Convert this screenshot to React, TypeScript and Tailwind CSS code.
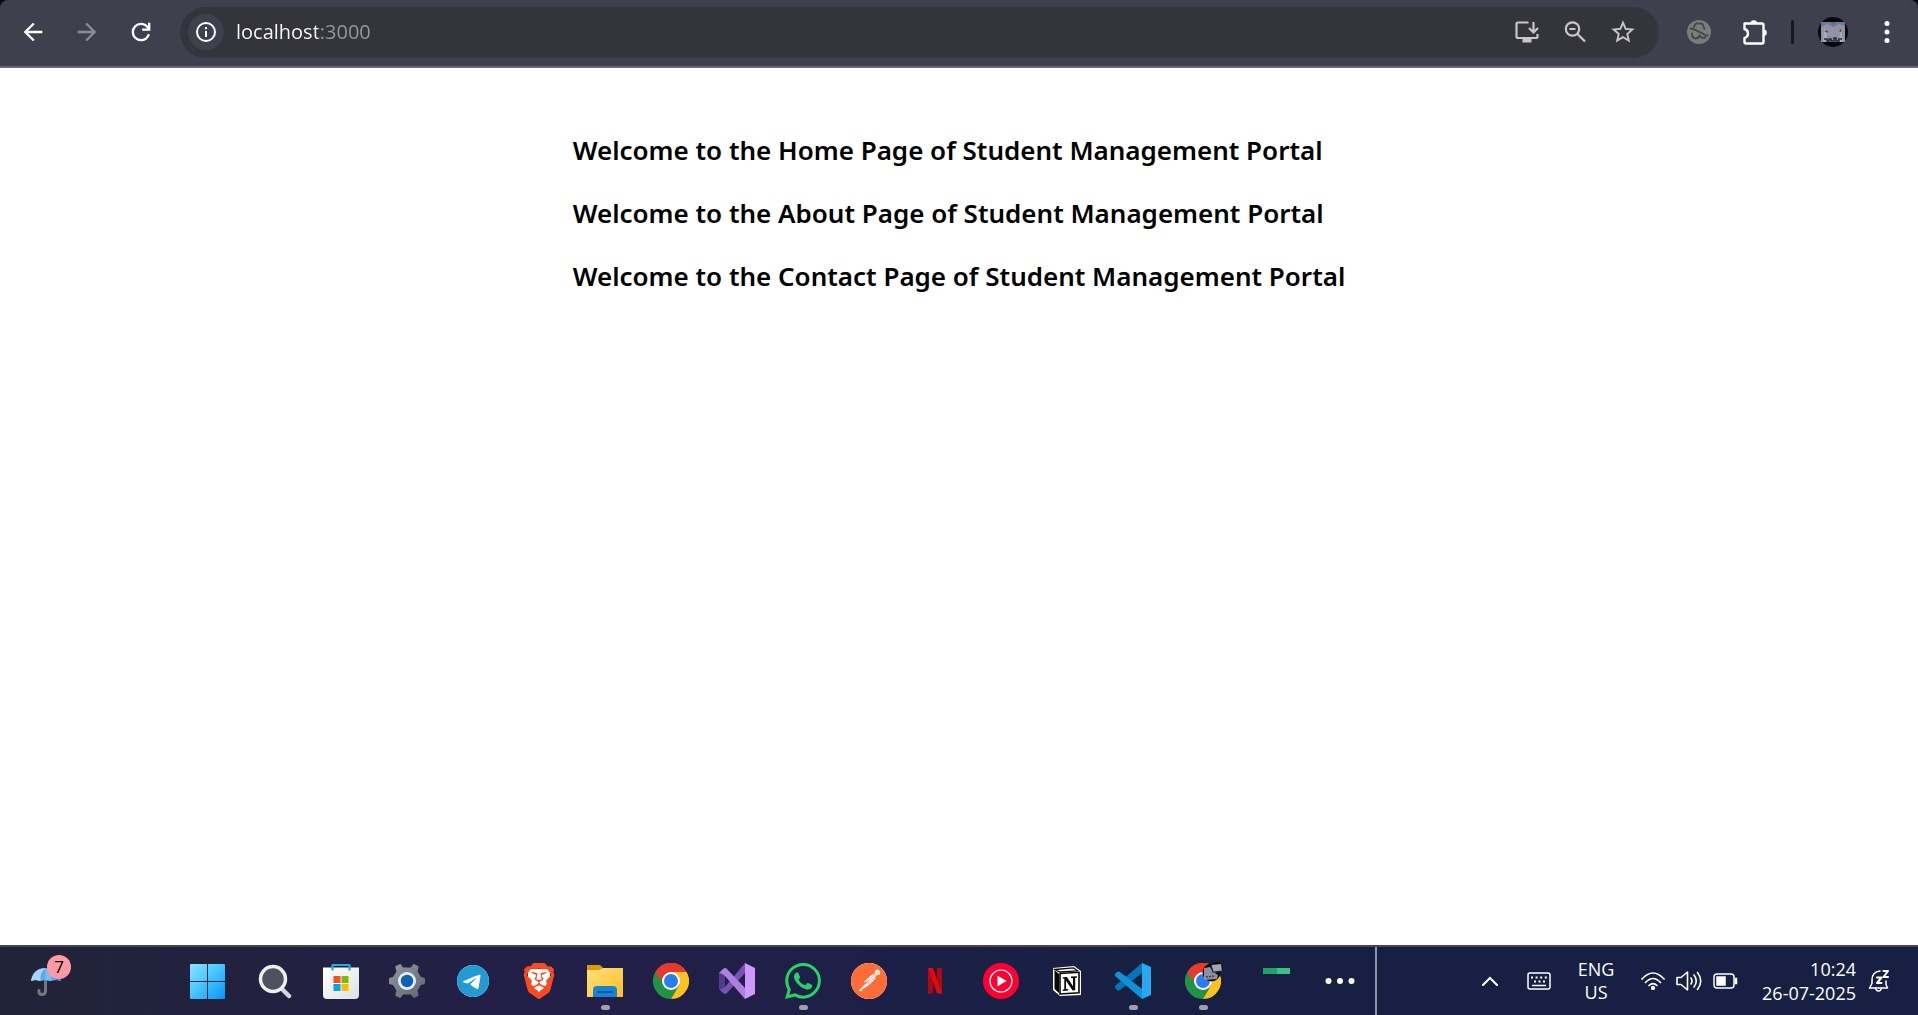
import type { ReactNode } from "react";
import { MdArrowBack, MdArrowForward, MdStarBorder } from "react-icons/md";
import { SiBrave, SiPostman, SiTelegram, SiWhatsapp } from "react-icons/si";

const headings = ["Home", "About", "Contact"];

function ToolButton({ label, children, className = "" }: { label: string; children: ReactNode; className?: string }) {
  return (
    <button type="button" aria-label={label} className={`flex size-9 shrink-0 items-center justify-center rounded-full ${className}`}>
      {children}
    </button>
  );
}

function ReloadIcon() {
  return (
    <svg viewBox="0 0 24 24" className="size-7" fill="currentColor">
      <path d="M12 20q-3.35 0-5.675-2.325T4 12t2.325-5.675T12 4q1.725 0 3.3.713T18 6.75V4h2v7h-7V9h4.2q-.8-1.4-2.187-2.2T12 6Q9.5 6 7.75 7.75T6 12t1.75 4.25T12 18q1.925 0 3.475-1.1T17.65 14h2.1q-.7 2.65-2.85 4.325T12 20" />
    </svg>
  );
}

function InfoIcon() {
  return (
    <svg viewBox="0 0 20 20" className="size-5" fill="none" stroke="currentColor" strokeWidth="2">
      <circle cx="10" cy="10" r="9" />
      <path d="M10 9v6M10 5v2.2" />
    </svg>
  );
}

function InstallIcon() {
  return (
    <svg viewBox="0 0 24 22" className="h-[22px] w-6" fill="none" stroke="currentColor" strokeWidth="2.2">
      <path d="M13.5 1.5H3q-1.500 0-1.500 1.500v12.500q0 1.500 1.500 1.500h18q1.500 0 1.500-1.500V13" />
      <path d="M18.500 1v9.500M14 7l4.500 4.500L23 7" />
      <path d="M7.500 19.500h9" strokeWidth="4" />
    </svg>
  );
}

function ZoomOutIcon() {
  return (
    <svg viewBox="0 0 22 22" className="size-[22px]" fill="none" stroke="currentColor" strokeWidth="2.200">
      <circle cx="8.500" cy="8" r="6.700" />
      <path d="M13.500 13l7.500 7.500M5.500 8h6" />
    </svg>
  );
}

function BlockedIcon() {
  return (
    <svg viewBox="0 0 24 24" className="size-6">
      <circle cx="12" cy="12" r="12" fill="#7c7c7c" />
      <g fill="none" stroke="#45464c" strokeWidth="1.800" strokeLinecap="round" strokeLinejoin="round">
        <path d="M6.500 7.500L8.500 4q1-1 3.500-.3 2.500-.7 3.500.3l2 5" />
        <path d="M3.500 8.500q4 .5 9 3.500t8 3.500" strokeWidth="2" />
        <path d="M5 13.500q0 5 3.500 5t4-3q3 4 6 1.500" />
      </g>
    </svg>
  );
}

function PuzzleIcon() {
  return (
    <svg viewBox="0 0 26 26" className="size-[26px]">
      <path
        d="M2.500 4.500H20q1.500 0 1.500 1.500v17q0 1.500-1.500 1.500H4q-1.500 0-1.500-1.500v-4q3.500-1 3.500-4.500t-3.500-4.500z"
        fill="none"
        stroke="white"
        strokeWidth="2.400"
        strokeLinejoin="round"
      />
      <path d="M8.500 4.500a3.300 3.300 0 0 1 6.600 0zM21.500 10.500a3.300 3.300 0 0 1 0 6.600z" fill="white" />
    </svg>
  );
}

function Jersey({ className }: { className: string }) {
  return (
    <svg viewBox="0 0 30 30" className={className}>
      <circle cx="15" cy="15" r="15" fill="#09090c" />
      <path d="M3 5h24v20H3z" fill="#9093a5" />
      <path d="M3 5h7l5 3 5-3h7v4l-6-2-6 3-6-3-6 3z" fill="#647ba4" />
      <path d="M11 5h8l-4 3z" fill="#8d5b50" />
      <path d="M6 11l3 4v10H5zM23 10l2 15h-4z" fill="#a8aaba" />
      <path d="M7 14l3 1M22.500 12v3" stroke="#714644" strokeWidth="1.500" />
      <path d="M6 22h3v2h2v-2h2v2h3v-3h2v3h3v-2h3" fill="none" stroke="#242a40" strokeWidth="1.500" />
    </svg>
  );
}

function BrowserBar() {
  return (
    <header className="bg-[#0b0a10]">
      <div className="flex h-[68px] items-center rounded-t-lg border-b-2 border-[#6a6673] bg-[#3f404e] pr-[13px] pb-0.5 pl-[15px] text-white">
        <nav aria-label="Browser navigation" className="flex gap-[18px]">
          <ToolButton label="Back"><MdArrowBack className="size-7" /></ToolButton>
          <ToolButton label="Forward" className="text-[#8b8c94]"><MdArrowForward className="size-7" /></ToolButton>
          <ToolButton label="Reload"><ReloadIcon /></ToolButton>
        </nav>
        <div className="ml-[21px] flex h-[51px] min-w-0 flex-1 items-center rounded-full bg-[#34343c] pr-[18px] pl-2">
          <ToolButton label="View site information" className="bg-[#3f404e]"><InfoIcon /></ToolButton>
          <input
            type="text"
            aria-label="Address"
            defaultValue="localhost:3000"
            className="ml-3 h-9 min-w-0 flex-1 bg-transparent bg-linear-to-r from-white from-[82px] to-[#97989e] to-[82px] bg-clip-text pb-0.5 font-['Open_Sans',sans-serif] text-[20px] text-transparent outline-none"
          />
          <div className="flex gap-3 text-[#c7c7c9]">
            <ToolButton label="Install app"><InstallIcon /></ToolButton>
            <ToolButton label="Zoom"><ZoomOutIcon /></ToolButton>
            <ToolButton label="Bookmark this tab"><MdStarBorder className="size-7" /></ToolButton>
          </div>
        </div>
        <div className="ml-[22px] flex items-center">
          <ToolButton label="Blocked extension"><BlockedIcon /></ToolButton>
          <ToolButton label="Extensions" className="ml-5"><PuzzleIcon /></ToolButton>
          <span className="ml-[18px] h-6 w-[3px] rounded-full bg-[#17171c]" />
          <ToolButton label="Profile" className="ml-[21px]"><Jersey className="size-[30px]" /></ToolButton>
          <ToolButton label="Browser menu" className="ml-[18px]">
            <svg viewBox="0 0 6 22" className="h-[22px] w-1.5" fill="white">
              <circle cx="3" cy="2.500" r="2.500" /><circle cx="3" cy="11" r="2.500" /><circle cx="3" cy="19.500" r="2.500" />
            </svg>
          </ToolButton>
        </div>
      </div>
    </header>
  );
}

function WeatherIcon() {
  return (
    <svg viewBox="0 0 34 30" className="h-[30px] w-[34px]">
      <path d="M15.500 10v14.500q0 4-3.500 4t-3-4" fill="none" stroke="#77777b" strokeWidth="3" strokeLinecap="round" />
      <path d="M1 15Q3 2 15.500 2T31 15l-5-1-5 1-5.500-1-5 1-5-1z" fill="#5fa9ee" />
      <path d="M1 15Q3 3 15.500 2q-6 5-5 13l-5-1z" fill="#a8d3f8" />
      <path d="M15.500 2q8 4 5.500 13l-5.500-1z" fill="#7dbbf3" />
      <path d="M15.500 2Q29 3 31 15l-5-1q-2-9-10.500-12" fill="#2d8ce0" />
    </svg>
  );
}

function WindowsIcon() {
  return (
    <svg viewBox="0 0 35 35" className="size-[35px]">
      <defs>
        <linearGradient id="win" gradientUnits="userSpaceOnUse" x1="0" y1="0" x2="35" y2="35">
          <stop stopColor="#8ce3ff" /><stop offset=".45" stopColor="#49c8fc" /><stop offset="1" stopColor="#0894fb" />
        </linearGradient>
      </defs>
      <path d="M1 0h16v17H0V1q0-1 1-1M18 0h16q1 0 1 1v16H18zM0 18h17v17H1q-1 0-1-1zM18 18h17v16q0 1-1 1H18z" fill="url(#win)" />
    </svg>
  );
}

function SearchIcon() {
  return (
    <svg viewBox="0 0 34 35" className="h-[35px] w-[34px]">
      <path d="M23 24l8 8" stroke="#d4d5da" strokeWidth="4.500" strokeLinecap="round" />
      <circle cx="15" cy="15" r="12.500" fill="#4f5060" stroke="#efeff1" strokeWidth="3.500" />
    </svg>
  );
}

function StoreIcon() {
  return (
    <svg viewBox="0 0 36 36" className="size-9">
      <defs>
        <linearGradient id="store" x2="1" y2="1"><stop stopColor="#fff" /><stop offset="1" stopColor="#dfe0e3" /></linearGradient>
      </defs>
      <path d="M0 4.500h36V32q0 4-4 4H4q-4 0-4-4z" fill="url(#store)" />
      <path d="M9.500 7.500V2h17v5.500" fill="none" stroke="#22aaf0" strokeWidth="2.200" strokeLinejoin="round" />
      <path d="M10.500 13h7v7h-7z" fill="#f25022" /><path d="M18.500 13h7v7h-7z" fill="#7fba00" />
      <path d="M10.500 21h7v7h-7z" fill="#00a4ef" /><path d="M18.500 21h7v7h-7z" fill="#ffb900" />
    </svg>
  );
}

function SettingsIcon() {
  return (
    <svg viewBox="0 0 36 36" className="size-9">
      <defs><linearGradient id="gear" x2="1" y2="1"><stop stopColor="#949ba1" /><stop offset="1" stopColor="#5b656d" /></linearGradient></defs>
      <path d="M7 3l3.500-1.800q1-.4 1.600.5L14 4.500h8l1.900-2.800q.6-.9 1.600-.5L29 3q1 .6.6 1.600L28.500 8.500l3.500 5.500 3 .7q1 .3 1 1.300v4q0 1-1 1.300l-3 .7-3.500 5.500 1.100 3.900q.4 1-.6 1.600l-3.500 1.800q-1 .4-1.600-.5L22 31.500h-8l-1.900 2.800q-.6.9-1.600.5L7 33q-1-.6-.6-1.600l1.100-3.900L4 22l-3-.7q-1-.3-1-1.300v-4q0-1 1-1.300L4 14l3.500-5.500-1.100-3.900Q6 3.600 7 3z" fill="url(#gear)" />
      <circle cx="18" cy="18" r="9" fill="#ececee" /><circle cx="18" cy="18" r="6.200" fill="#0b63b5" />
    </svg>
  );
}

function TelegramIcon() {
  return (
    <span className="flex size-8 items-center justify-center rounded-full bg-white">
      <SiTelegram className="size-8 text-[#229bd5]" />
    </span>
  );
}

function BraveIcon() {
  return (
    <span className="relative flex size-9 items-center justify-center">
      <span className="absolute h-6 w-[22px] rounded-b-xl bg-white" />
      <SiBrave className="relative size-9 text-[#fb4a20]" />
    </span>
  );
}

function FolderIcon() {
  return (
    <svg viewBox="0 0 36 34" className="h-[34px] w-9">
      <defs><linearGradient id="folder" x2="1" y2="1"><stop stopColor="#ffe07b" /><stop offset="1" stopColor="#ffbf25" /></linearGradient></defs>
      <path d="M0 1h12q2 0 4 3v4H0z" fill="#dd9a06" />
      <path d="M0 6h12l4-2h20v29H0z" fill="url(#folder)" />
      <path d="M6 33v-7q0-4 4-4h16q4 0 4 4v7z" fill="#1484d6" />
      <path d="M11 28h14" stroke="#0b539b" strokeWidth="2" strokeLinecap="round" />
    </svg>
  );
}

function ChromeIcon() {
  return (
    <svg viewBox="0 0 36 36" className="size-9">
      <path d="M18 18L2.410 9A18 18 0 0 1 33.590 9z" fill="#e33b2e" />
      <path d="M18 18L2.410 9A18 18 0 0 0 18 36l7.800-13.500z" fill="#219344" />
      <path d="M18 9h15.590A18 18 0 0 1 18 36l7.800-13.500z" fill="#fcc31e" />
      <path d="M2.410 9l7.800 13.500L18 18V9z" fill="#219344" />
      <path d="M2.410 9A18 18 0 0 1 33.590 9H18l-7.800 4.500-2.800 4.100z" fill="#e33b2e" />
      <circle cx="18" cy="18" r="9" fill="white" /><circle cx="18" cy="18" r="7" fill="#2c7cee" />
    </svg>
  );
}

function VisualStudioIcon() {
  return (
    <svg viewBox="0 0 36 36" className="size-9">
      <path d="M0 10l6-4v24l-6-4z" fill="#57398c" />
      <path d="M26 0v10L8 30q-2 2-4 0l-4-4q3 1 6-2z" fill="#7a52b5" />
      <path d="M0 10l4-4q2-2 4 0l18 19v11L6 13q-3-3-6-3" fill="#ae7fe2" />
      <path d="M26 0l10 5v26l-10 5z" fill="#cd98fc" />
    </svg>
  );
}

function YoutubeMusicIcon() {
  return (
    <svg viewBox="0 0 36 36" className="size-9">
      <circle cx="18" cy="18" r="18" fill="#ff0033" />
      <circle cx="18" cy="18" r="11" fill="none" stroke="white" strokeWidth="1.200" />
      <path d="M14.500 12.500l9 5.500-9 5.500z" fill="white" />
    </svg>
  );
}

function NetflixIcon() {
  return (
    <svg viewBox="0 0 14 26" className="h-[26px] w-3.5">
      <path d="M0 0h5v25l-5 1zM9 0h5v26l-5-1z" fill="#ad0a12" />
      <path d="M0 0h5l9 26-5-1z" fill="#e30914" />
    </svg>
  );
}

function NotionIcon() {
  return (
    <svg viewBox="0 0 30 30" className="size-[30px]">
      <path d="M1 2l21-2 7 5v24L8 30l-7-6z" fill="white" />
      <path d="M3 3.500l18.500-1.700 4 3L8 6z" fill="#fff" stroke="#080808" strokeWidth="1.300" />
      <path d="M2.500 4l4.500 4v19l-4.500-4z" fill="#080808" />
      <path d="M8 7.500l19-1.200v20.500L8 28z" fill="white" stroke="#080808" strokeWidth="1.600" />
      <path d="M11 11.300l4-.3 6 9.200v-8l-2-.3v-1.300l6-.4v1.300l-1.800.5v12.300l-2.600.2L14 14.700v8.200l2.300.4v1.200l-5.600.4v-1.200l1.600-.5v-10.400l-1.600-.3z" fill="#080808" />
    </svg>
  );
}

function CodeIcon() {
  return (
    <svg viewBox="0 0 36 36" className="size-9">
      <path d="M27 0v10L5 27q-2 1-3 0l-2-2q-1-1 0-2z" fill="#0674b9" />
      <path d="M0 13q-1-1 0-2l2-2q1-1 3 0l22 17v10z" fill="#1191d7" />
      <path d="M27 0l9 4v28l-9 4z" fill="#27a8f1" />
    </svg>
  );
}

function ProfileBadge() {
  return (
    <svg viewBox="0 0 21 20" className="absolute -top-px -right-0.5 h-5 w-[21px]">
      <circle cx="9.500" cy="10.500" r="9" fill="#09090c" />
      <circle cx="15" cy="6" r="6" fill="#09090c" />
      <path d="M2 6l6-1 3 5 5 3-1 4-13 1z" fill="#8c8fa0" />
      <path d="M9 3l10-1 1 7-9 2z" fill="#a3a5b3" />
      <path d="M9 3l2 7 9-1" fill="none" stroke="#26293a" strokeWidth="1.200" />
      <path d="M4 15l9-1" stroke="#3b4054" strokeWidth="1.500" strokeDasharray="2 1" />
    </svg>
  );
}

function ProfileChromeIcon() {
  return (
    <span className="relative">
      <ChromeIcon />
      <ProfileBadge />
    </span>
  );
}

function GreenBarsIcon() {
  return (
    <span className="mb-5 flex h-1.5 w-[27px] bg-[#35c583]"><span className="w-3.5 bg-[#239f67]" /></span>
  );
}

function MoreIcon() {
  return (
    <svg viewBox="0 0 30 6" className="h-1.5 w-[30px]" fill="white">
      <circle cx="3.500" cy="3" r="3" /><circle cx="15" cy="3" r="3" /><circle cx="26.500" cy="3" r="3" />
    </svg>
  );
}

const apps: { name: string; icon: ReactNode; open?: boolean }[] = [
  { name: "Search", icon: <SearchIcon /> },
  { name: "Microsoft Store", icon: <StoreIcon /> },
  { name: "Settings", icon: <SettingsIcon /> },
  { name: "Telegram", icon: <TelegramIcon /> },
  { name: "Brave", icon: <BraveIcon /> },
  { name: "File Explorer", icon: <FolderIcon />, open: true },
  { name: "Chrome", icon: <ChromeIcon /> },
  { name: "Visual Studio", icon: <VisualStudioIcon /> },
  { name: "WhatsApp", icon: <SiWhatsapp className="size-9 text-[#25d366]" />, open: true },
  { name: "Postman", icon: <span className="rounded-full bg-white"><SiPostman className="size-9 text-[#ff6c37]" /></span> },
  { name: "Netflix", icon: <NetflixIcon /> },
  { name: "YouTube Music", icon: <YoutubeMusicIcon /> },
  { name: "Notion", icon: <NotionIcon /> },
  { name: "Visual Studio Code", icon: <CodeIcon />, open: true },
];

function AppButton({ name, icon, open, className = "w-[66px]" }: { name: string; icon: ReactNode; open?: boolean; className?: string }) {
  return (
    <button type="button" aria-label={name} className={`relative flex h-full shrink-0 items-center justify-center ${className}`}>
      {icon}
      {open && <span className="absolute bottom-[5px] h-[5px] w-[9px] rounded-full bg-[#a09fae]" />}
    </button>
  );
}

function ChevronIcon() {
  return (
    <svg viewBox="0 0 18 10" className="h-2.5 w-[18px]" fill="none" stroke="white" strokeWidth="2" strokeLinecap="round">
      <path d="M2 9l7-7 7 7" />
    </svg>
  );
}

function KeyboardIcon() {
  return (
    <svg viewBox="0 0 24 18" className="h-[18px] w-6" fill="none" stroke="white" strokeWidth="1.500">
      <rect x="1" y="1" width="22" height="16" rx="2" />
      <path d="M4 5.500h16" strokeWidth="2" strokeDasharray="2 2.600" />
      <path d="M7 9.500h11" strokeWidth="2" strokeDasharray="2 2.500" />
      <path d="M5 13.500h14" />
    </svg>
  );
}

function StatusIcons() {
  return (
    <>
      <svg viewBox="0 0 24 18" className="h-[18px] w-6" fill="none" stroke="white" strokeWidth="1.700" strokeLinecap="round">
        <path d="M1 7Q12-5 23 7M4.500 10.500q7.500-8 15 0M8 13.500q4-4 8 0" />
        <circle cx="12" cy="16" r="1.300" fill="white" />
      </svg>
      <svg viewBox="0 0 26 22" className="h-[22px] w-[26px]" fill="none" stroke="white" strokeWidth="1.600" strokeLinecap="round" strokeLinejoin="round">
        <path d="M1 7.500h4L11.500 2v18L5 14.500H1z" />
        <path d="M15 8q2 3 0 6M18 5q4.500 6 0 12M21.500 2.500q6.500 8.500 0 17" />
      </svg>
      <svg viewBox="0 0 25 18" className="h-[18px] w-[25px]" fill="none" stroke="white" strokeWidth="1.500">
        <rect x="1" y="2" width="20" height="14" rx="3" />
        <path d="M4 5h8v8H4z" fill="white" />
        <path d="M22.500 6.500h1v5h-1z" fill="white" />
      </svg>
    </>
  );
}

function QuietBellIcon() {
  return (
    <svg viewBox="0 0 22 24" className="h-6 w-[22px]" fill="none" stroke="white" strokeWidth="1.500" strokeLinecap="round" strokeLinejoin="round">
      <path d="M12 2Q4 3 4 11v3.500L1.500 19h18L18 15.500V12" />
      <path d="M7.500 19q.5 3 3 3t3-3" />
      <path d="M9 8.500h4.500L9 14h4.500M15.500 2H20l-4.500 6H20" strokeWidth="2" />
    </svg>
  );
}

function Taskbar() {
  return (
    <footer className="flex h-[70px] shrink-0 border-t-2 border-[#434658] bg-linear-to-r from-[#212338] via-[#231f49] via-30% to-[#172043] to-60% font-['Open_Sans',sans-serif] text-white">
      <button type="button" aria-label="Weather, 7 notifications" className="relative ml-[30px] flex w-10 shrink-0 items-center">
        <WeatherIcon />
        <span className="absolute top-2 left-[17px] flex size-6 items-center justify-center rounded-full bg-[#ff99a4] text-[17px] text-black">7</span>
      </button>
      <nav aria-label="Taskbar" className="ml-[103px] flex">
        <AppButton name="Start" icon={<WindowsIcon />} className="w-[69px]" />
        {apps.map((app) => (
          <AppButton key={app.name} {...app} />
        ))}
        <AppButton name="Chrome profile" icon={<ProfileChromeIcon />} open className="w-[74px]" />
        <AppButton name="Activity" icon={<GreenBarsIcon />} className="w-[72px]" />
        <AppButton name="More apps" icon={<MoreIcon />} className="w-14" />
      </nav>
      <span className="ml-[7px] w-0.5 shrink-0 bg-[#9094a7]" />
      <div className="ml-auto flex items-center pr-7">
        <button type="button" aria-label="Show hidden icons" className="p-1"><ChevronIcon /></button>
        <button type="button" aria-label="Touch keyboard" className="ml-6"><KeyboardIcon /></button>
        <button type="button" className="ml-[25px] w-10 text-center text-[18px] leading-[23px]">ENG<br />US</button>
        <button type="button" aria-label="Network, volume and battery" className="ml-[25px] flex items-center gap-[11px]"><StatusIcons /></button>
        <button type="button" aria-label="Clock and notifications" className="ml-6 flex items-center gap-3">
          <time className="text-right text-[18px] leading-6">10:24<br />26-07-2025</time>
          <QuietBellIcon />
        </button>
      </div>
    </footer>
  );
}

export default function App() {
  return (
    <div className="flex min-h-screen flex-col bg-white">
      <BrowserBar />
      <main className="flex-1 pt-16">
        <div className="mx-auto flex w-fit flex-col gap-[27px] font-['Noto_Sans',sans-serif] text-[26px] leading-9 font-semibold text-black">
          {headings.map((name) => (
            <h2 key={name}>Welcome to the {name} Page of Student Management Portal</h2>
          ))}
        </div>
      </main>
      <Taskbar />
    </div>
  );
}
